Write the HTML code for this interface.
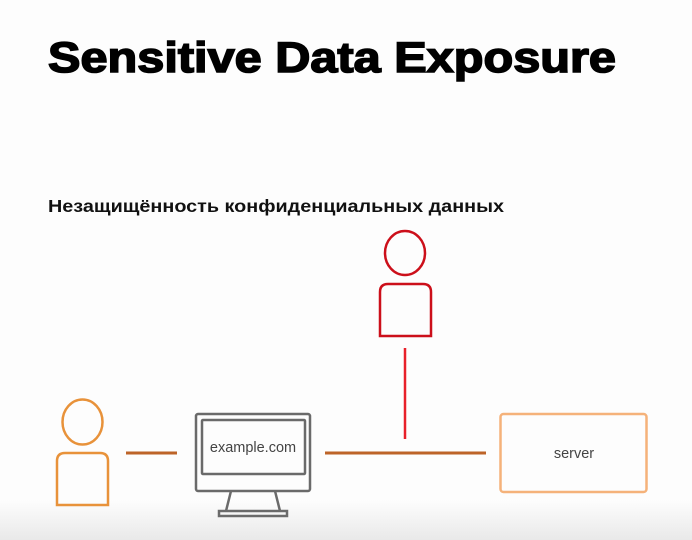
<!DOCTYPE html>
<html><head><meta charset="utf-8"><style>
html,body{margin:0;padding:0;background:#fdfdfd;width:692px;height:540px;overflow:hidden}
svg{display:block}
</style></head><body>
<svg width="692" height="540" viewBox="0 0 692 540" xmlns="http://www.w3.org/2000/svg">
<defs><linearGradient id="g" x1="0" y1="0" x2="0" y2="1"><stop offset="0" stop-color="#fdfdfd"/><stop offset="1" stop-color="#e9e9e9"/></linearGradient></defs>
<rect width="692" height="540" fill="#fdfdfd"/>
<rect y="500" width="692" height="40" fill="url(#g)"/>
<text x="48" y="72" font-family="Liberation Sans, sans-serif" font-weight="bold" font-size="43" textLength="568" lengthAdjust="spacingAndGlyphs" fill="#000" stroke="#000" stroke-width="1.6">Sensitive Data Exposure</text>
<text x="48" y="212" font-family="Liberation Sans, sans-serif" font-weight="bold" font-size="17.5" textLength="456" lengthAdjust="spacingAndGlyphs" fill="#111">Незащищённость конфиденциальных данных</text>
<g fill="none" stroke="#e8923a" stroke-width="2.5">
<ellipse cx="82.5" cy="422" rx="20" ry="22.5"/>
<path d="M57 505 V461 Q57 453 65 453 H100 Q108 453 108 461 V505 Z"/>
</g>
<line x1="126" y1="453" x2="177" y2="453" stroke="#bd6428" stroke-width="3"/>
<g fill="none" stroke="#6a6a6a" stroke-width="2.5">
<rect x="196" y="414" width="114" height="77" rx="2"/>
<rect x="202" y="420" width="103" height="54" rx="1"/>
<path d="M231 491 L226 511 M275 491 L280 511"/>
<rect x="219" y="511" width="68" height="5"/>
</g>
<text x="253" y="452" text-anchor="middle" font-family="Liberation Sans, sans-serif" font-size="14.5" fill="#444">example.com</text>
<line x1="325" y1="453" x2="486" y2="453" stroke="#bd6428" stroke-width="3"/>
<g fill="none" stroke="#cc0f1a" stroke-width="2.5">
<ellipse cx="405" cy="253" rx="20" ry="22"/>
<path d="M380 336 V292 Q380 284 388 284 H423 Q431 284 431 292 V336 Z"/>
</g>
<line x1="405" y1="348" x2="405" y2="439" stroke="#e8202a" stroke-width="2.5"/>
<rect x="500.5" y="414" width="146" height="78" rx="3" fill="none" stroke="#f5b27a" stroke-width="2.5"/>
<text x="574" y="458" text-anchor="middle" font-family="Liberation Sans, sans-serif" font-size="14.5" fill="#444">server</text>
</svg>
</body></html>
